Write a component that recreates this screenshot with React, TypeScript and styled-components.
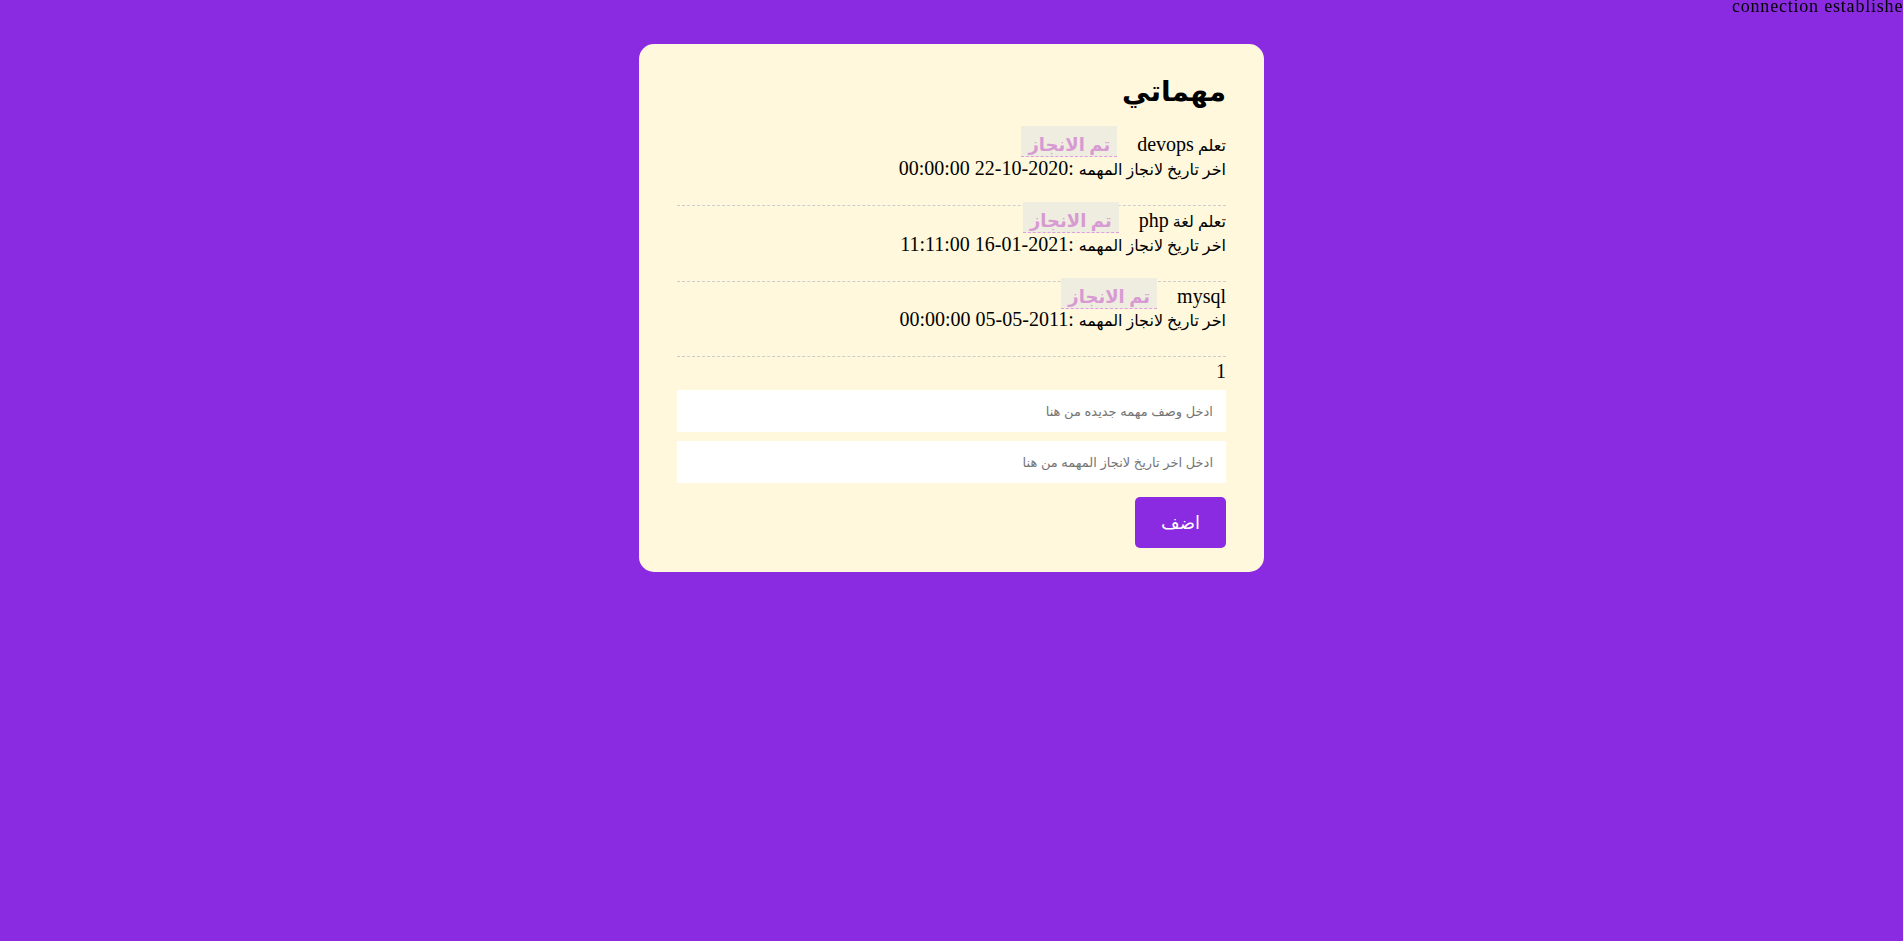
import { FunctionComponent } from "react";
import styled, { createGlobalStyle } from "styled-components";

const GlobalStyle = createGlobalStyle`
  html, body {
    margin: 0;
    padding: 0;
    background-color: #8a2be2;
    overflow-x: hidden;
  }
  body {
    font-family: "Liberation Serif", "DejaVu Sans", serif;
    min-height: 941px;
  }
`;

// Styled Components
const Status = styled.div`
  position: fixed;
  top: -4px;
  right: -10px;
  font-size: 18px;
  letter-spacing: 0.8px;
  white-space: nowrap;
  color: #000;
`;

const Card = styled.div`
  direction: rtl;
  width: 625px;
  box-sizing: border-box;
  margin: 44px auto 0;
  padding: 8px 38px 24px;
  background-color: #fff8dc;
  border-radius: 15px;
  color: #000;
`;

const Title = styled.h1`
  font-size: 28px;
  font-weight: bold;
  line-height: 37px;
  margin: 21px 0 20px;
`;

const TaskList = styled.div`
  display: flex;
  flex-direction: column;
`;

const Task = styled.div`
  font-size: 20px;
  line-height: 22px;
  padding: 3px 0 24px;
  border-bottom: 1px dashed #cccccc;
`;

// Arabic words fall back to DejaVu Sans, which runs larger than the Latin face
const Ar = styled.span`
  font-size: 16px;
`;

const Badge = styled.span`
  font-size: 18px;
  font-weight: bold;
  color: #d79ad2;
  background-color: #efede0;
  padding: 9px 7px 1px;
  margin-inline-start: 15px;
  border-bottom: 1px dashed #dda0dd;
`;

const Counter = styled.div`
  font-size: 20px;
  line-height: 22px;
  padding-top: 3px;
  margin-bottom: 8px;
`;

const Form = styled.form`
  display: flex;
  flex-direction: column;
  align-items: flex-start;
  gap: 9px;
`;

const Field = styled.input`
  align-self: stretch;
  height: 42px;
  box-sizing: border-box;
  border: none;
  outline: none;
  padding: 0 13px;
  background-color: #fff;
  font-family: "Liberation Sans", "DejaVu Sans", sans-serif;
  font-size: 13px;

  &::placeholder {
    color: #757575;
  }
`;

const AddButton = styled.button`
  width: 91px;
  height: 51px;
  margin-top: 5px;
  border: none;
  border-radius: 5px;
  background-color: #8a2be2;
  color: #fff;
  font-family: "Liberation Sans", "DejaVu Sans", sans-serif;
  font-size: 18px;
  cursor: pointer;
`;

const tasks = [
  { ar: "تعلم", name: "devops", due: "2020-10-22 00:00:00" },
  { ar: "تعلم لغة", name: "php", due: "2021-01-16 11:11:00" },
  { ar: "", name: "mysql", due: "2011-05-05 00:00:00" },
];

// Component
const App: FunctionComponent = () => {
  return (
    <>
      <GlobalStyle />
      <Status>connection established</Status>
      <Card>
        <Title>مهماتي</Title>
        <TaskList>
          {tasks.map((t) => (
            <Task key={t.name}>
              {t.ar && <Ar>{t.ar} </Ar>}
              {t.name} <Badge>تم الانجاز</Badge>
              <br />
              <Ar>اخر تاريخ لانجاز المهمه</Ar> :{t.due}
            </Task>
          ))}
        </TaskList>
        <Counter>1</Counter>
        <Form onSubmit={(e) => e.preventDefault()}>
          <Field placeholder="ادخل وصف مهمه جديده من هنا" />
          <Field placeholder="ادخل اخر تاريخ لانجاز المهمه من هنا" />
          <AddButton type="submit">اضف</AddButton>
        </Form>
      </Card>
    </>
  );
};

export default App;
